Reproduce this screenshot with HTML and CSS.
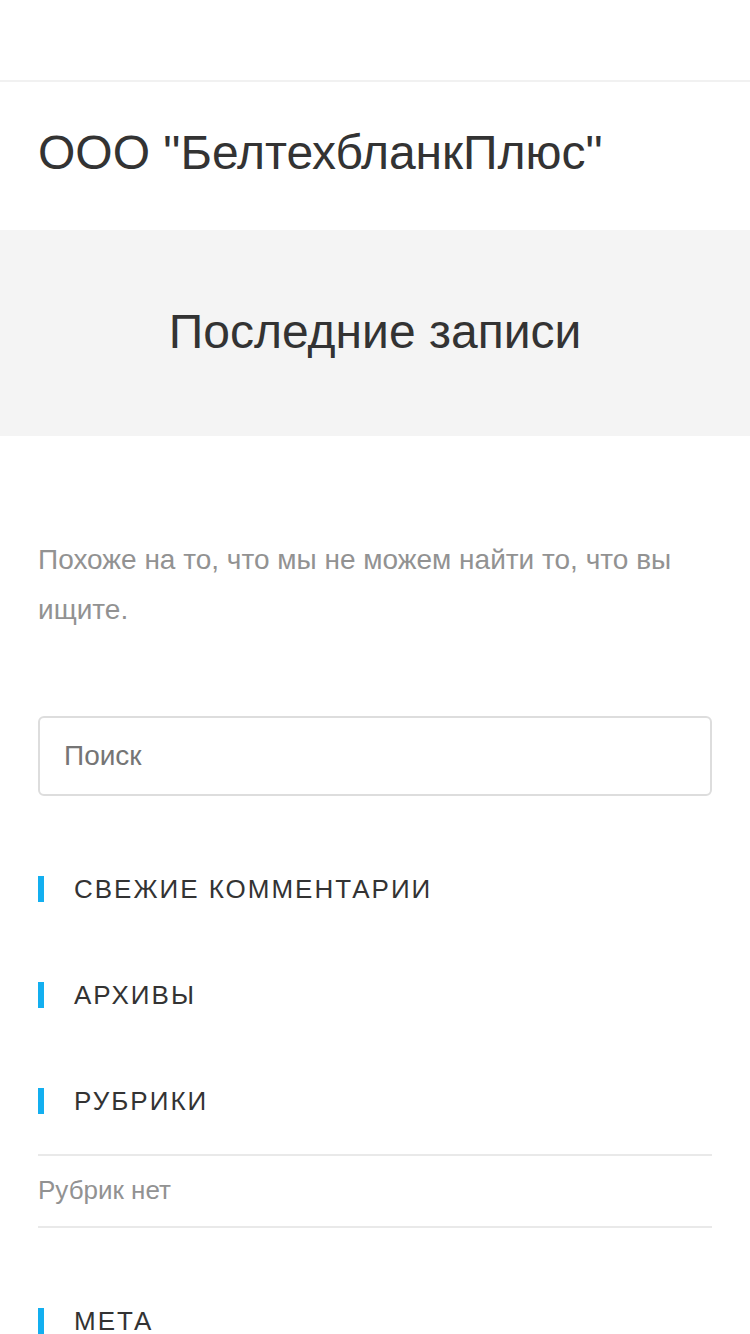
FILE: index.html
```html
<!DOCTYPE html>
<html lang="ru">
<head>
<meta charset="utf-8">
<title>Последние записи</title>
<link rel="stylesheet" href="styles.css">
</head>
<body>
<div class="top-bar"></div>
<header class="site-header">
  <a class="site-title" href="#">ООО "БелтехбланкПлюс"</a>
</header>
<section class="page-header">
  <h1 class="page-title">Последние записи</h1>
</section>
<main class="content">
  <p class="notice">Похоже на то, что мы не можем найти то, что вы ищите.</p>
  <form class="search-form">
    <input class="search-input" type="search" placeholder="Поиск">
  </form>
  <div class="widget">
    <h4 class="widget-title">Свежие комментарии</h4>
  </div>
  <div class="widget">
    <h4 class="widget-title">Архивы</h4>
  </div>
  <div class="widget">
    <h4 class="widget-title">Рубрики</h4>
    <ul class="widget-list">
      <li>Рубрик нет</li>
    </ul>
  </div>
  <div class="widget">
    <h4 class="widget-title">Мета</h4>
  </div>
</main>
</body>
</html>
```
FILE: styles.css
```css
* { box-sizing: border-box; }
html, body { margin: 0; padding: 0; background: #fff; }
body {
  font-family: "Liberation Sans", Arial, sans-serif;
  color: #333;
}
.top-bar {
  height: 82px;
  border-bottom: 2px solid #f1f1f1;
}
.site-header {
  height: 148px;
  padding: 0 38px;
  display: flex;
  align-items: center;
}
.site-title {
  font-size: 48px;
  line-height: 1;
  color: #333;
  text-decoration: none;
  margin-top: -6px;
}
.page-header {
  background: #f4f4f4;
  height: 206px;
  display: flex;
  align-items: center;
  justify-content: center;
}
.page-title {
  margin: 0 0 2px;
  font-size: 48px;
  font-weight: 400;
  line-height: 1.4;
  color: #333;
}
.content {
  padding: 99px 38px 0;
}
.notice {
  margin: 0 0 80px;
  font-size: 28px;
  line-height: 1.8;
  color: #929292;
}
.search-form { margin: 0 0 80px; }
.search-input {
  display: block;
  width: 100%;
  height: 80px;
  border: 2px solid #ddd;
  border-radius: 6px;
  padding: 0 24px;
  font-family: "Liberation Sans", Arial, sans-serif;
  font-size: 28px;
  color: #333;
  background: #fff;
  outline: none;
}
.search-input::placeholder { color: #757575; opacity: 1; }
.widget { margin-bottom: 80px; }
.widget-title {
  margin: 0;
  border-left: 6px solid #13aff0;
  padding-left: 30px;
  font-size: 26px;
  line-height: 1;
  font-weight: 400;
  letter-spacing: 2px;
  text-transform: uppercase;
  color: #333;
}
.widget-list {
  list-style: none;
  margin: 40px 0 0;
  padding: 0;
  border-top: 2px solid #e9e9e9;
}
.widget-list li {
  font-size: 26px;
  line-height: 1.8;
  padding: 11px 0 12px;
  color: #929292;
  border-bottom: 2px solid #e9e9e9;
}
```
